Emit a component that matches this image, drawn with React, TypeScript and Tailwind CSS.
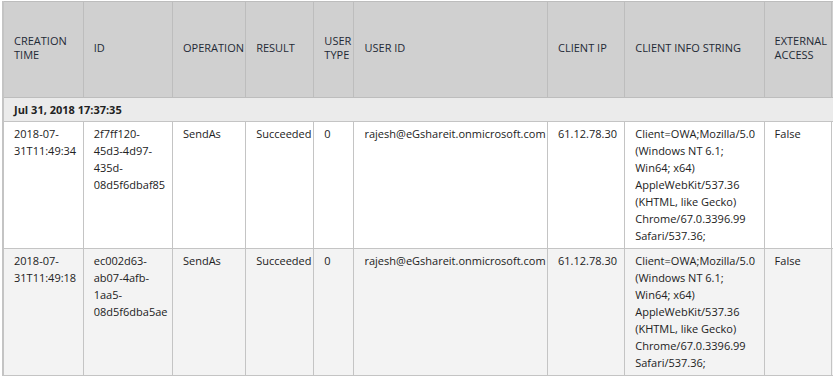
import React from "react";

type Row = {
  time: string[];
  id: string[];
  op: string;
  result: string;
  userType: string;
  userId: string;
  ip: string;
  info: string[];
  external: string;
};

const rows: Row[] = [
  {
    time: ["2018-07-", "31T11:49:34"],
    id: ["2f7ff120-", "45d3-4d97-", "435d-", "08d5f6dbaf85"],
    op: "SendAs",
    result: "Succeeded",
    userType: "0",
    userId: "rajesh@eGshareit.onmicrosoft.com",
    ip: "61.12.78.30",
    info: [
      "Client=OWA;Mozilla/5.0",
      "(Windows NT 6.1;",
      "Win64; x64)",
      "AppleWebKit/537.36",
      "(KHTML, like Gecko)",
      "Chrome/67.0.3396.99",
      "Safari/537.36;",
    ],
    external: "False",
  },
  {
    time: ["2018-07-", "31T11:49:18"],
    id: ["ec002d63-", "ab07-4afb-", "1aa5-", "08d5f6dba5ae"],
    op: "SendAs",
    result: "Succeeded",
    userType: "0",
    userId: "rajesh@eGshareit.onmicrosoft.com",
    ip: "61.12.78.30",
    info: [
      "Client=OWA;Mozilla/5.0",
      "(Windows NT 6.1;",
      "Win64; x64)",
      "AppleWebKit/537.36",
      "(KHTML, like Gecko)",
      "Chrome/67.0.3396.99",
      "Safari/537.36;",
    ],
    external: "False",
  },
];

const widths = ["w-[80px]", "w-[89px]", "w-[73px]", "w-[68px]", "w-[40px]", "w-[193px]", "w-[77px]", "w-[139px]", "w-[67px]", "w-[60px]"];

function Lines({ lines }: { lines: string[] }) {
  return (
    <>
      {lines.map((l, i) => (
        <div key={i}>{l}</div>
      ))}
    </>
  );
}

export default function App() {
  const th = "border border-[#bdbdbd] pl-[10px] pr-1 pb-[3px] text-left align-middle font-normal";
  const td = "border border-[#c4c4c4] pl-[10px] pr-1 pt-[3px] align-top whitespace-nowrap";
  return (
    <div className="h-[378px] w-[833px] overflow-hidden bg-white font-['Open_Sans','Noto_Sans',sans-serif] text-[11px] leading-[17px] text-[#222]">
      <table className="ml-[2px] mt-[1px] w-[890px] table-fixed border-collapse border-l-2 border-l-[#c4c4c4]">
        <colgroup>
          {widths.map((w, i) => (
            <col key={i} className={w} />
          ))}
        </colgroup>
        <thead>
          <tr className="h-[96px] bg-[#d0d0d0] leading-[14px] text-[#1f2a36]">
            <th className={th}>CREATION<br />TIME</th>
            <th className={th}>ID</th>
            <th className={th}>OPERATION</th>
            <th className={th}>RESULT</th>
            <th className={th}>USER<br />TYPE</th>
            <th className={th}>USER ID</th>
            <th className={th}>CLIENT IP</th>
            <th className={th}>CLIENT INFO STRING</th>
            <th className={th}>EXTERNAL<br />ACCESS</th>
            <th className={th}></th>
          </tr>
        </thead>
        <tbody>
          <tr className="h-[24px] bg-[#ebebeb]">
            <td colSpan={10} className="border border-[#c4c4c4] pl-[10px] pb-px align-middle font-bold">
              Jul 31, 2018 17:37:35
            </td>
          </tr>
          {rows.map((r, i) => (
            <tr key={i} className={i % 2 === 0 ? "h-[127px] bg-white" : "h-[127px] bg-[#f3f3f3]"}>
              <td className={td}><Lines lines={r.time} /></td>
              <td className={td}><Lines lines={r.id} /></td>
              <td className={td}>{r.op}</td>
              <td className={td}>{r.result}</td>
              <td className={td}>{r.userType}</td>
              <td className={td}>{r.userId}</td>
              <td className={td}>{r.ip}</td>
              <td className={td}><Lines lines={r.info} /></td>
              <td className={td}>{r.external}</td>
              <td className={td}></td>
            </tr>
          ))}
        </tbody>
      </table>
    </div>
  );
}
